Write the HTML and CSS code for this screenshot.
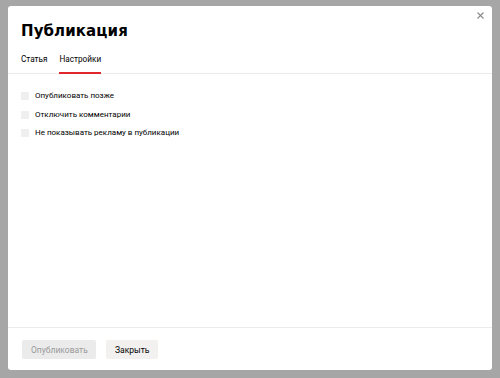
FILE: index.html
```html
<!DOCTYPE html>
<html lang="ru">
<head>
  <meta charset="UTF-8">
  <title>Публикация</title>
  <link rel="stylesheet" href="styles.css">
</head>
<body>
  <div class="modal">
    <button class="close" aria-label="Закрыть">
      <svg width="7" height="7" viewBox="0 0 7 7"><path d="M0.5 0.5L6.5 6.5M6.5 0.5L0.5 6.5" stroke="#8a8a8a" stroke-width="1.1"/></svg>
    </button>
    <div class="head">
      <h1>Публикация</h1>
      <div class="tabs">
        <span class="tab">Статья</span>
        <span class="tab active">Настройки</span>
      </div>
    </div>

    <div class="body">
      <label class="check"><span class="box"></span>Опубликовать позже</label>
      <label class="check"><span class="box"></span>Отключить комментарии</label>
      <label class="check"><span class="box"></span>Не показывать рекламу в публикации</label>
    </div>

    <div class="foot">
      <button class="btn disabled">Опубликовать</button>
      <button class="btn">Закрыть</button>
    </div>
  </div>
</body>
</html>
```

FILE: styles.css
```css
body {
  margin: 0;
  padding: 6px 8px 8px;
  background: #a6a6a6;
  font-family: Roboto, "Liberation Sans", sans-serif;
  color: #000;
}
.modal {
  position: relative;
  background: white;
  width: 484px;
  height: 364px;
  border-radius: 3px;
  display: flex;
  flex-direction: column;
  box-sizing: border-box;
}
.close {
  position: absolute;
  top: 6px;
  right: 8px;
  border: none;
  background: none;
  padding: 0;
  width: 7px;
  height: 7px;
  display: flex;
}
.head {
  padding: 16px 13px 0;
  border-bottom: 1px solid #ececec;
}
h1 {
  margin: 0;
  font-family: "DejaVu Sans", sans-serif;
  font-size: 15px;
  line-height: 18px;
  font-weight: 700;
  letter-spacing: 0.1px;
}
.tabs {
  display: flex;
  gap: 12px;
  margin-top: 13px;
  margin-bottom: -1px;
}
.tab {
  font-size: 8.2px;
  line-height: 12px;
  padding-bottom: 7px;
  border-bottom: 2px solid transparent;
}
.tab.active {
  border-bottom-color: #e0262b;
}
.body {
  flex: 1;
  padding: 16px 13px;
  display: flex;
  flex-direction: column;
  gap: 6.5px;
}
.check {
  display: flex;
  align-items: center;
  gap: 6px;
  font-size: 8px;
  line-height: 12px;
}
.box {
  width: 8px;
  height: 8px;
  background: #efefef;
  border-radius: 1px;
}
.foot {
  border-top: 1px solid #ececec;
  padding: 12px 14px 11px;
  display: flex;
  gap: 10px;
}
.btn {
  font-family: inherit;
  font-size: 8.5px;
  height: 19px;
  padding: 0 9px;
  border: none;
  border-radius: 2px;
  background: #f2f1ef;
  color: #000;
}
.btn.disabled {
  width: 74px;
  background: #ebebeb;
  color: #9a9a9a;
}
```
